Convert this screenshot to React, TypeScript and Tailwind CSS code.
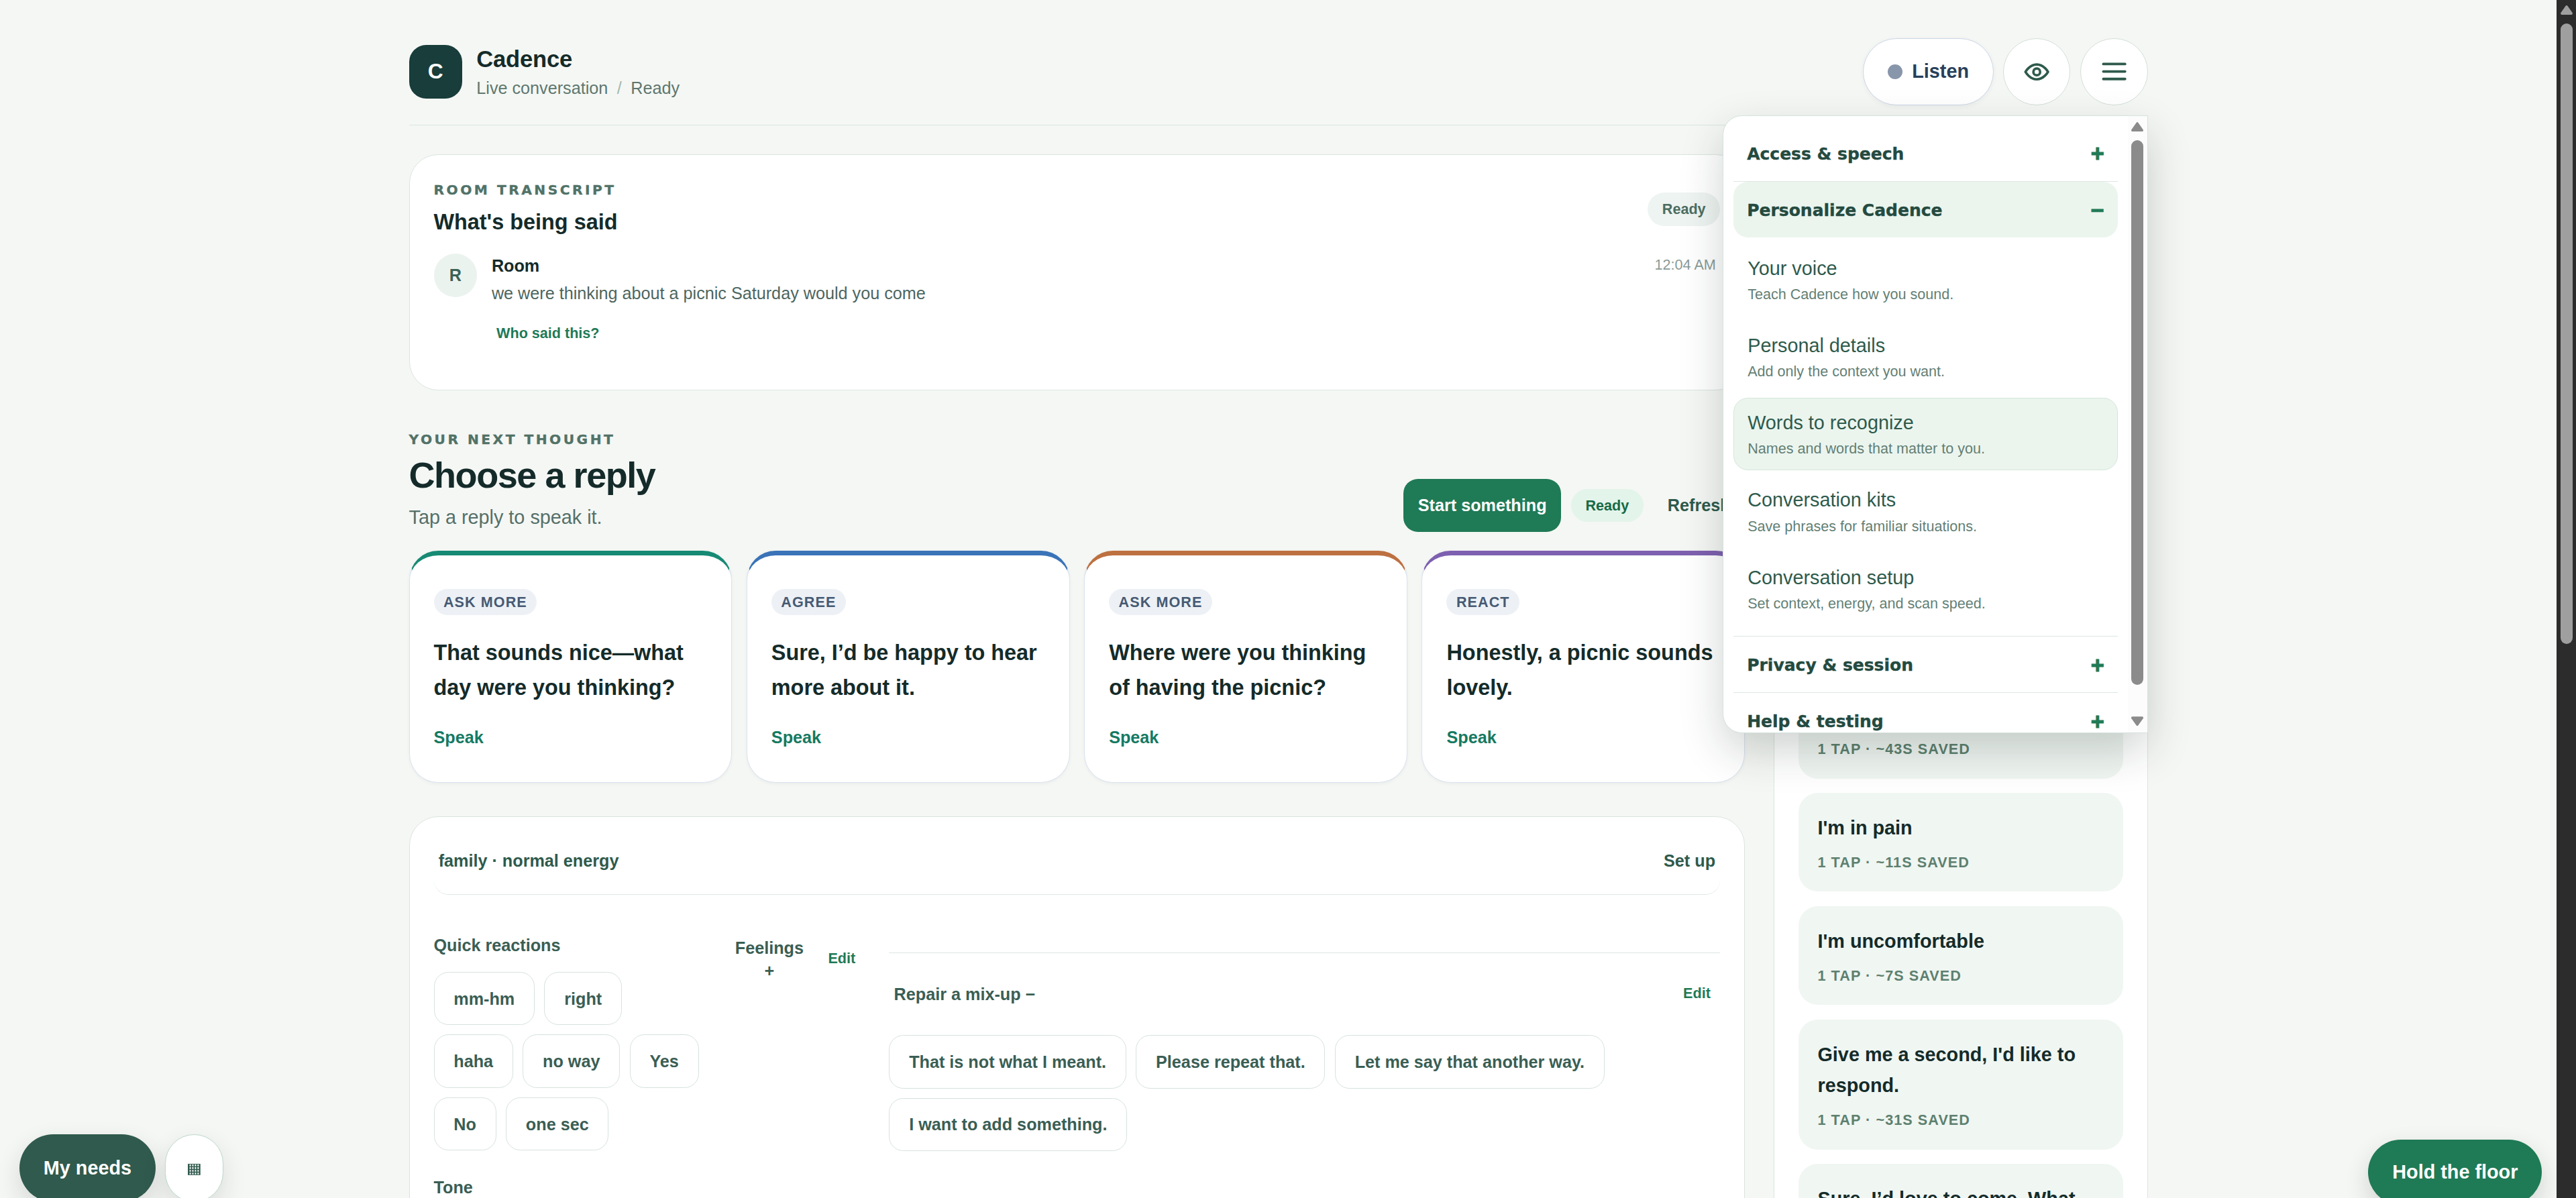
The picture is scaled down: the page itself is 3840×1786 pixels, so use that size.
import React from "react";

interface Reply {
  tag: string;
  text: string;
  accent: string;
}

interface SavedPhrase {
  text: string;
  seconds: number;
}

interface MenuItem {
  title: string;
  description: string;
  active?: boolean;
}

const REPLIES: Reply[] = [
  { tag: "ASK MORE", text: "That sounds nice—what day were you thinking?", accent: "border-t-[#178a74]" },
  { tag: "AGREE", text: "Sure, I’d be happy to hear more about it.", accent: "border-t-[#3a73b8]" },
  { tag: "ASK MORE", text: "Where were you thinking of having the picnic?", accent: "border-t-[#bd7040]" },
  { tag: "REACT", text: "Honestly, a picnic sounds lovely.", accent: "border-t-[#7e60b0]" },
];

const QUICK_REACTIONS = ["mm-hm", "right", "haha", "no way", "Yes", "No", "one sec"];

const REPAIRS = [
  "That is not what I meant.",
  "Please repeat that.",
  "Let me say that another way.",
  "I want to add something.",
];

const PHRASES: SavedPhrase[] = [
  { text: "", seconds: 43 },
  { text: "I'm in pain", seconds: 11 },
  { text: "I'm uncomfortable", seconds: 7 },
  { text: "Give me a second, I'd like to respond.", seconds: 31 },
  { text: "Sure, I’d love to come. What", seconds: 24 },
];

const PERSONALIZE_ITEMS: MenuItem[] = [
  { title: "Your voice", description: "Teach Cadence how you sound." },
  { title: "Personal details", description: "Add only the context you want." },
  { title: "Words to recognize", description: "Names and words that matter to you.", active: true },
  { title: "Conversation kits", description: "Save phrases for familiar situations." },
  { title: "Conversation setup", description: "Set context, energy, and scan speed." },
];

const EyeIcon = () => (
  <svg
    className="w-[22.4px] h-[22.4px]"
    viewBox="0 0 24 24"
    fill="none"
    stroke="currentColor"
    strokeWidth="2.2"
    strokeLinecap="round"
    strokeLinejoin="round"
  >
    <path d="M2 12s3.6-6.6 10-6.6S22 12 22 12s-3.6 6.6-10 6.6S2 12 2 12Z" />
    <circle cx="12" cy="12" r="3" />
  </svg>
);

const MenuIcon = () => (
  <svg
    className="w-6 h-6"
    viewBox="0 0 24 24"
    fill="none"
    stroke="currentColor"
    strokeWidth="2.1"
    strokeLinecap="round"
  >
    <path d="M3 5.8h18M3 12h18M3 18.2h18" />
  </svg>
);

const GridIcon = () => (
  <svg className="w-[10.4px] h-[9.4px]" viewBox="0 0 19 17">
    <rect width="19" height="17" fill="#305a4d" />
    <path
      d="M2.6 2.3h14.4M2.6 6.4h14.4M2.6 10.5h14.4M2.6 14.6h14.4"
      stroke="#fff"
      strokeWidth="2.6"
      strokeDasharray="2 2"
    />
  </svg>
);

const Eyebrow: React.FC<{ children: React.ReactNode }> = ({ children }) => (
  <p className="font-['DejaVu_Sans',sans-serif] font-bold text-[11.2px] leading-4 tracking-[1.95px] text-[#517267] [-webkit-text-stroke:0.2px_#517267]">
    {children}
  </p>
);

const PhraseChip: React.FC<{ label: string }> = ({ label }) => (
  <button className="h-11 px-4 rounded-xl border border-[#d6e2dd] bg-white text-sm font-bold text-[#3a5e54] whitespace-nowrap">
    {label}
  </button>
);

const MenuGroup: React.FC<{ label: string; open?: boolean }> = ({ label, open }) => (
  <button
    className={`flex w-full h-[46px] items-center justify-between px-[11.2px] pt-[1.2px] ${
      open ? "rounded-xl bg-[#ebf5ee]" : ""
    }`}
  >
    <span className="font-['DejaVu_Sans',sans-serif] font-bold text-[13.9px] text-[#244a40] [-webkit-text-stroke:0.2px_#244a40]">
      {label}
    </span>
    <span className="text-[19px] leading-none font-bold text-[#1f7a56] [-webkit-text-stroke:0.6px_#1f7a56]">
      {open ? "−" : "+"}
    </span>
  </button>
);

const SettingsMenu = () => (
  <div className="absolute right-0 top-16 z-20 flex w-[352px] h-[512px] rounded-l-2xl border border-[#d5e2dc] bg-white overflow-hidden shadow-[0_14px_36px_rgba(20,35,30,0.2)] text-left">
    <div className="flex-1 py-2 pl-[8.4px] pr-[8.3px]">
      <div className="border-b border-[#dce7e2]">
        <MenuGroup label="Access & speech" />
      </div>
      <div className="border-b border-[#dce7e2]">
        <MenuGroup label="Personalize Cadence" open />
        <div className="flex flex-col gap-1 pt-[5.2px] pb-[9.2px]">
          {PERSONALIZE_ITEMS.map((item) => (
            <button
              key={item.title}
              className={`h-[60px] px-[11.2px] rounded-xl border text-left ${
                item.active ? "border-[#d3e6db] bg-[#ebf5ee]" : "border-transparent"
              }`}
            >
              <span className="block pt-[0.8px] text-base leading-5 text-[#2e5a4c]">{item.title}</span>
              <span className="block mt-1 text-xs leading-4 text-[#647f75]">
                {item.description}
              </span>
            </button>
          ))}
        </div>
      </div>
      <div className="border-b border-[#dce7e2]">
        <MenuGroup label="Privacy & session" />
      </div>
      <MenuGroup label="Help & testing" />
    </div>

    {/* Menu scrollbar */}
    <div className="flex w-4 flex-col items-center bg-[#fcfcfc] text-[#8b8b8b]">
      <svg className="mt-[5px] w-[10px] h-2" viewBox="0 0 10 8" fill="currentColor">
        <path d="M4.2.6a1 1 0 0 1 1.6 0l4 5.6A1 1 0 0 1 9 7.8H1a1 1 0 0 1-.8-1.6Z" />
      </svg>
      <div className="mt-[7px] w-[10px] h-[451.5px] rounded-full bg-[#8b8b8b]" />
      <svg className="mt-[26px] w-[10px] h-2" viewBox="0 0 10 8" fill="currentColor">
        <path d="M4.2 7.4a1 1 0 0 0 1.6 0l4-5.6A1 1 0 0 0 9 .2H1a1 1 0 0 0-.8 1.6Z" />
      </svg>
    </div>
  </div>
);

const Header = () => (
  <header className="flex items-center justify-between pb-4 border-b border-[#dbe5df]">
    <div className="flex items-center gap-3">
      <div className="flex w-11 h-11 items-center justify-center rounded-[14px] bg-[#183d3a] text-[17.6px] font-bold text-white">
        C
      </div>
      <div className="pt-[1.4px]">
        <h1 className="text-[19.2px] leading-6 font-bold tracking-[-0.1px] text-[#142b2a]">Cadence</h1>
        <p className="mt-[1.8px] flex gap-[7.5px] text-sm leading-5 text-[#5e776f]">
          <span>Live conversation</span>
          <span className="text-[#a3b8ae]">/</span>
          <span>Ready</span>
        </p>
      </div>
    </div>
    <div className="relative flex gap-2">
      <button className="-mr-[0.5px] flex h-14 items-center gap-2 rounded-full border border-[#cbd7e6] bg-white px-5 text-base font-bold text-[#27405a] shadow-[0_1px_4px_rgba(30,50,80,0.06)]">
        <span className="w-3 h-3 rounded-full bg-[#8896ab]" />
        Listen
      </button>
      <button
        className="flex w-14 h-14 items-center justify-center rounded-full border border-[#d3dfd9] bg-white text-[#2e5a4c]"
        aria-label="Display options"
      >
        <EyeIcon />
      </button>
      <button
        className="flex w-14 h-14 items-center justify-center rounded-full border border-[#d3dfd9] bg-white text-[#2e5a4c]"
        aria-label="Menu"
      >
        <MenuIcon />
      </button>
      <SettingsMenu />
    </div>
  </header>
);

const Transcript = () => (
  <section className="h-[195.2px] px-5 pt-[20.8px] rounded-3xl border border-[#dbe5df] bg-white">
    <div className="flex items-start justify-between">
      <div>
        <Eyebrow>ROOM TRANSCRIPT</Eyebrow>
        <h2 className="mt-[6.8px] text-lg leading-6 font-bold text-[#142b2a]">What's being said</h2>
      </div>
      <span className="mt-[10.4px] px-3 rounded-full bg-[#eef4f1] text-xs leading-[27.6px] font-bold text-[#4c6d62]">
        Ready
      </span>
    </div>
    <div className="mt-[13.8px] flex gap-3">
      <div className="flex w-9 h-9 items-center justify-center rounded-full bg-[#ebf3ef] text-sm font-bold text-[#3b6156]">
        R
      </div>
      <div className="flex-1">
        <p className="text-sm leading-5 font-bold text-[#142b2a]">Room</p>
        <p className="mt-[3px] text-sm leading-5 text-[#4d665f]">
          we were thinking about a picnic Saturday would you come
        </p>
        <button className="block mt-[15.2px] px-1 text-xs leading-4 font-bold text-[#1f7a56]">
          Who said this?
        </button>
      </div>
      <time className="mt-[1.6px] mr-[3.6px] text-xs leading-4 text-[#8a9b96]">12:04 AM</time>
    </div>
  </section>
);

const ReplyPicker = () => (
  <section className="mt-[32.8px]">
    <div className="flex items-end justify-between">
      <div>
        <Eyebrow>YOUR NEXT THOUGHT</Eyebrow>
        <h2 className="mt-[3.6px] text-3xl leading-9 font-bold tracking-[-0.8px] text-[#142b2a]">
          Choose a reply
        </h2>
        <p className="mt-[5px] text-base leading-6 text-[#557069]">Tap a reply to speak it.</p>
      </div>
      <div className="flex items-center gap-2">
        <button className="h-11 px-[12.2px] rounded-xl bg-[#1f7a56] text-sm font-bold text-white">
          Start something
        </button>
        <span className="px-3 rounded-full bg-[#e3f4ea] text-xs leading-[27.6px] font-bold text-[#176a45]">
          Ready
        </span>
        <button className="px-3 text-sm font-bold text-[#2e5a4c]">Refresh</button>
      </div>
    </div>
    <div className="mt-[15.5px] grid grid-cols-4 gap-3">
      {REPLIES.map((reply) => (
        <article
          key={reply.text}
          className={`h-[192.3px] px-5 pt-[27.6px] rounded-3xl border border-t-4 border-[#dae2ee] ${reply.accent} bg-white shadow-[0_1px_3px_rgba(30,50,80,0.05)]`}
        >
          <span className="block w-fit px-2 rounded-full bg-[#edf1f6] text-xs leading-[22.2px] font-bold tracking-[0.05em] text-[#475a73]">
            {reply.tag}
          </span>
          <p className="mt-[16.5px] text-lg leading-[29px] font-bold text-[#142b2a]">{reply.text}</p>
          <button className="block mt-[16.5px] text-sm leading-5 font-bold text-[#157a62]">Speak</button>
        </article>
      ))}
    </div>
  </section>
);

const ConversationPanel = () => (
  <section className="mt-[27.7px] h-[400px] px-5 pt-2 rounded-t-3xl border border-[#dbe5df] bg-white">
    <div className="flex h-[56.5px] items-center justify-between px-1 rounded-xl border-b border-[#dce7e2] text-sm font-bold text-[#2e5a4c]">
      <span>family · normal energy</span>
      <button>Set up</button>
    </div>

    <div className="mt-[31.6px] flex items-start text-sm font-bold text-[#3a5e54]">
      <div className="w-[225px]">
        <h3 className="leading-5">Quick reactions</h3>
        <div className="mt-[12.3px] flex flex-wrap gap-2">
          {QUICK_REACTIONS.map((label) => (
            <PhraseChip key={label} label={label} />
          ))}
        </div>
        <h3 className="mt-[20.3px] leading-5">Tone</h3>
      </div>

      <button className="ml-6 mt-[3.6px] w-[58px] leading-[18.5px] text-center">Feelings +</button>
      <button className="ml-[19px] mt-[13.4px] w-6 text-xs leading-4 text-[#1f7a56]">Edit</button>

      <div className="ml-[27.2px] mt-4 flex-1 border-t border-[#dce7e2]">
        <div className="mt-[24px] flex items-center justify-between pl-1 pr-2 leading-5">
          <button>Repair a mix-up −</button>
          <button className="text-xs leading-4 text-[#1f7a56]">Edit</button>
        </div>
        <div className="mt-[24.2px] flex flex-wrap gap-2">
          {REPAIRS.map((label) => (
            <PhraseChip key={label} label={label} />
          ))}
        </div>
      </div>
    </div>
  </section>
);

const PhraseList = () => (
  <aside className="w-[309.5px] px-[19.6px] pt-[434.5px] rounded-t-3xl border border-[#dbe5df] bg-white">
    <div className="flex flex-col gap-3">
      {PHRASES.map((phrase) => (
        <div key={phrase.seconds} className="px-4 pt-4 pb-[15.7px] rounded-2xl bg-[#f0f6f2]">
          <p className="min-h-[26px] text-base leading-[26px] font-bold text-[#142b2a]">{phrase.text}</p>
          <p className="mt-[6.7px] text-xs leading-[17.4px] font-bold tracking-[0.05em] text-[#5d806f]">
            1 TAP · ~{phrase.seconds}S SAVED
          </p>
        </div>
      ))}
    </div>
  </aside>
);

const App = () => (
  <div className="flex h-screen overflow-hidden bg-[#f5f7f4] font-['Liberation_Sans',Arial,sans-serif]">
    <div className="relative flex-1 overflow-hidden [zoom:1.8]">
      <div className="mx-auto w-[1440px] pt-[31.4px]">
        <Header />
        <div className="mt-6 flex gap-6">
          <main className="flex-1">
            <Transcript />
            <ReplyPicker />
            <ConversationPanel />
          </main>
          <PhraseList />
        </div>
      </div>

      {/* Floating actions */}
      <div className="absolute left-4 top-[939.4px] flex gap-2">
        <button className="h-14 px-5 rounded-full bg-[#305a4d] text-base font-bold text-white shadow-[0_8px_20px_rgba(20,30,25,0.14)]">
          My needs
        </button>
        <button
          className="flex w-12 h-14 items-center justify-center rounded-full border border-[#bcd8cb] bg-white pt-[2px] shadow-[0_8px_20px_rgba(20,30,25,0.12)]"
          aria-label="Board"
        >
          <GridIcon />
        </button>
      </div>
      <button className="absolute right-3 top-[943.8px] h-[54px] px-5 rounded-full bg-[#1f7a56] text-base font-bold text-white shadow-[0_8px_20px_rgba(20,30,25,0.16)]">
        Hold the floor
      </button>
    </div>

    {/* Page scrollbar */}
    <div className="w-[29px] bg-[#2c2c2c] pl-1.5 pt-2 text-[#9f9f9f]">
      <svg className="w-[18px] h-[14px]" viewBox="0 0 18 14" fill="currentColor">
        <path d="M7.4.9a2 2 0 0 1 3.2 0l7 10.2A1.9 1.9 0 0 1 16 14H2a1.9 1.9 0 0 1-1.6-2.9Z" />
      </svg>
      <div className="mt-[13px] w-[18px] h-[925px] rounded-full bg-[#9f9f9f]" />
    </div>
  </div>
);

export default App;
